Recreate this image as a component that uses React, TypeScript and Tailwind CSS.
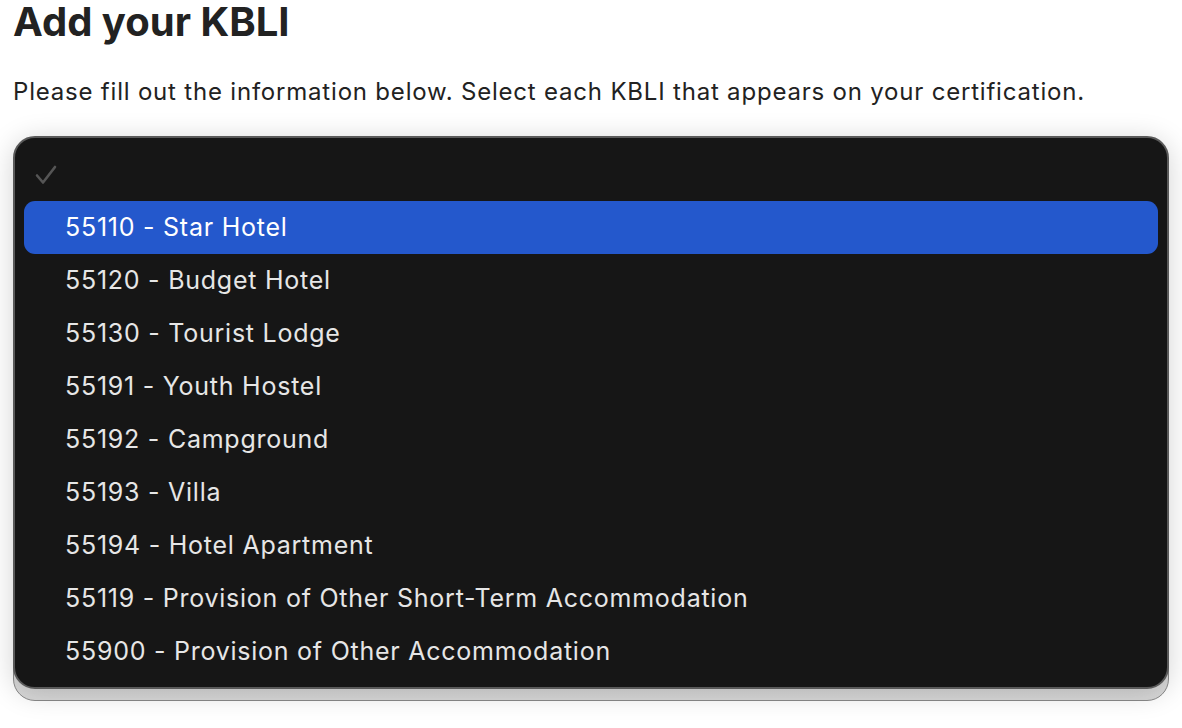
import React from 'react';

const options = [
  '55110 - Star Hotel',
  '55120 - Budget Hotel',
  '55130 - Tourist Lodge',
  '55191 - Youth Hostel',
  '55192 - Campground',
  '55193 - Villa',
  '55194 - Hotel Apartment',
  '55119 - Provision of Other Short-Term Accommodation',
  '55900 - Provision of Other Accommodation',
];

export default function App() {
  return (
    <div className="min-h-screen w-[1182px] bg-white font-['Inter',sans-serif] text-[#222222]">
      <div className="px-[13px]">
        <h1 className="text-[40px] font-bold leading-[44px] tracking-[0px]">Add your KBLI</h1>
        <p className="mt-[33px] text-[24px] leading-[30px] text-[#222222] tracking-[0.8px]">
          Please fill out the information below. Select each KBLI that appears on your certification.
        </p>

        <div className="relative mt-[29px]">
          {/* select box underneath the open list */}
          <div className="absolute left-0 right-0 top-[12px] bottom-[-12px] rounded-[22px] border border-[#8a8a8a] bg-gradient-to-b from-[#eeeeee] to-[#d9d9d9]" />

          <div className="relative rounded-[22px] border-2 border-[#5a5a5a] bg-[#161616] px-[9px] pt-[9px] pb-[9px] shadow-[0_4px_28px_rgba(0,0,0,0.18)]">
            <div className="flex h-[54px] items-center pl-[11px] pt-[2px]">
              <svg width="22" height="20" viewBox="0 0 22 20" fill="none">
                <path d="M2 10.5 L8 17.5 L20 2" stroke="#555555" strokeWidth="2.6" strokeLinecap="round" strokeLinejoin="round" />
              </svg>
            </div>
            {options.map((opt, i) => (
              <div
                key={opt}
                className={
                  i === 0
                    ? 'flex h-[53px] items-center rounded-[11px] bg-[#2458cc] pl-[41px] text-[25px] tracking-[0.75px] text-white'
                    : 'flex h-[53px] items-center pl-[41px] text-[25px] tracking-[0.75px] text-[#e6e6e6]'
                }
              >
                {opt}
              </div>
            ))}
          </div>
        </div>
      </div>
    </div>
  );
}
